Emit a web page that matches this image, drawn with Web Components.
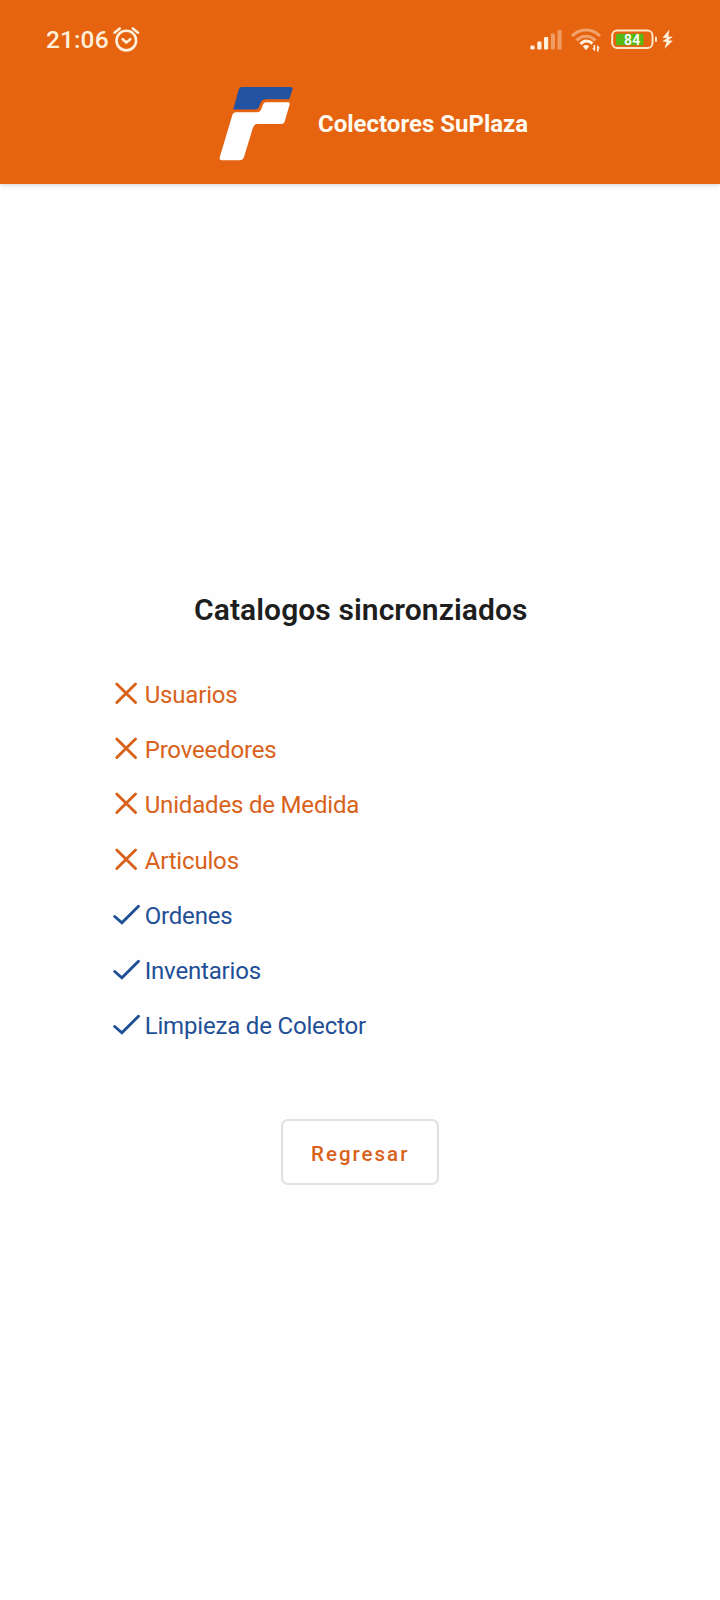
<!DOCTYPE html>
<html lang="es">
<head>
<meta charset="utf-8">
<title>Colectores SuPlaza</title>
<style>
html, body { margin: 0; background: #fefefe; }
body { font-family: Roboto, "Liberation Sans", sans-serif; }
</style>
</head>
<body>
<sync-screen></sync-screen>
<script>
function define(name, html) {
  const tpl = document.createElement('template');
  tpl.innerHTML = html;
  customElements.define(name, class extends HTMLElement {
    constructor() {
      super();
      this.attachShadow({ mode: 'open' }).appendChild(tpl.content.cloneNode(true));
    }
  });
}

define('status-bar', `
<style>
:host { display: flex; justify-content: space-between; height: 80px; box-sizing: border-box; padding: 0 44px 0 46px; color: #fff0dc; }
.time { display: flex; }
.clock { font-size: 24.5px; font-weight: 500; line-height: 30px; padding-top: 25px; width: 67px; white-space: nowrap; letter-spacing: .1px; }
svg { display: block; overflow: visible; }
.alarm { margin-top: 25.5px; }
.battery { display: grid; margin-top: 30px; }
.battery > * { grid-area: 1 / 1; }
.level { font-size: 14px; font-weight: 600; line-height: 20px; padding-left: 93px; color: #fff; letter-spacing: .2px; }
</style>
<div class="time"><span class="clock">21:06</span>
<svg class="alarm" width="27" height="28" viewBox="0 0 27 28" fill="none" stroke="currentColor" stroke-width="2.6" stroke-linecap="round" stroke-linejoin="round"><circle cx="13.3" cy="14.6" r="9.8"/><path d="M1.5 6.7 6.8 2.5M25 6.7 19.8 2.5M9.7 13.2l3.6 3.3 4-3.3"/></svg></div>
<div class="battery">
<svg width="145" height="22" viewBox="0 0 145 22">
<g fill="#fff0dc"><rect x="-.6" y="15.5" width="4.3" height="4" rx="1.3"/><rect x="6.3" y="11.5" width="4.2" height="8" rx="1"/><rect x="13" y="7" width="4.2" height="12.5" rx="1"/><g opacity=".4"><rect x="19.8" y="3.5" width="4.2" height="16" rx="1"/><rect x="26.5" y="0" width="4.2" height="19.5" rx="1"/></g></g>
<g fill="none" stroke="#fff0dc" stroke-width="3"><path opacity=".45" d="M41 6C49-2 61-2 69 6M45.500 10.500C51 4.800 59 4.800 64.500 10.500"/><path d="M49.500 14C53 10 57.500 10 61.500 13.500"/></g>
<path fill="#fff0dc" d="M51.700 16.300Q55 13.500 58.300 16.300L55 20.300ZM64.200 15v6.500l-3.200-3.300h1.500V15ZM66 21.500V15l3.200 3.200H67.700v3.300Z"/>
<rect x="81.2" y=".4" width="40.3" height="17.600" rx="5" fill="none" stroke="#ffe6c8" stroke-width="2"/>
<rect x="85" y="3.800" width="27.500" height="11.500" rx="1.500" fill="#58b814"/>
<rect x="124" y="6.500" width="2" height="5.500" rx="1" fill="#ffe6c8"/>
<path d="M138.500 -.5 131.500 7.800l4.700.5-4.900 2.900 4.300.8-2.200 6.700 8.400-8-4.600-.5 4.700-3.400-4.600-.4Z" fill="#fff0dc"/>
</svg><span class="level">84</span></div>`);

define('brand-logo', `
<style>:host { display: block; } svg { display: block; overflow: visible; }</style>
<svg width="75" height="75" viewBox="0 0 75 75">
<path fill="#2352a3" d="M21.800 0H70.200Q73.200 0 72.400 2.800L69.200 12.300H46Q42 12.300 40.800 15.500L38.700 20.500Q37.800 22.600 34.700 22.600H13.200L18.300 4Q19.300 0 21.800 0Z"/>
<path fill="#fff" d="M46 15.300H68Q70.300 15.300 69.500 18L64.500 35Q63.800 37 61 37H37.500Q34 37 33 40.500L24 70Q22.800 73.200 19.500 73.200H1.500Q-1 73.200-.2 70L12.500 27.500Q13.500 25.300 16 25.300H37Q40 25.300 41 22.500L43 17.500Q43.800 15.300 46 15.300Z"/>
</svg>`);

define('app-header', `
<style>
:host { display: block; height: 184px; background: #e66310; box-shadow: 0 1px 5px rgba(0,0,0,.18); }
.bar { display: flex; padding: 7px 0 0 219.5px; }
.name { margin-left: 23.5px; padding-top: 22px; font-size: 24px; font-weight: 700; line-height: 30px; color: #fffaf0; white-space: nowrap; }
</style>
<status-bar></status-bar>
<div class="bar"><brand-logo></brand-logo><span class="name"><slot></slot></span></div>`);

define('catalog-item', `
<style>
:host { display: flex; height: 55.3px; color: #d9621b; font-size: 24px; line-height: 28px; white-space: nowrap; letter-spacing: -.18px; }
:host([done]) { color: #1f4f96; }
svg { display: block; width: 33px; height: 32px; flex: none; fill: none; stroke: currentColor; stroke-width: 2.9; stroke-linecap: round; margin-top: -1px; }
span { padding: 1px 0 0 .7px; }
:host([done]) .cross, :host(:not([done])) .check { display: none; }
</style>
<svg class="cross" viewBox="0 0 33 32"><path d="M5.800 5 24.500 23.500M24.500 5 5.800 23.500"/></svg>
<svg class="check" viewBox="0 0 33 32" stroke-linejoin="miter"><path d="M3.700 16.500 10.900 22.800 27.500 6.300"/></svg>
<span><slot></slot></span>`);

define('outline-button', `
<style>
:host { display: block; box-sizing: border-box; width: 158px; height: 66px; border: 2px solid #e1e1e1; border-radius: 7px; background: #fff; color: #d9621b; font-size: 20.5px; font-weight: 500; line-height: 66px; padding-left: 28px; letter-spacing: 2px; }
</style><slot></slot>`);

define('sync-screen', `
<style>
:host { display: block; width: 720px; height: 1600px; background: #fefefe; overflow: hidden; }
h1 { margin: 407px 0 0; padding-left: 194px; font-size: 30px; line-height: 38px; font-weight: 600; color: #1e1e1e; white-space: nowrap; letter-spacing: .08px; }
.list { display: flex; flex-direction: column; padding: 50.7px 0 0 111px; height: 387.1px; }
outline-button { margin: 52.3px 0 0 281px; }
</style>
<app-header>Colectores SuPlaza</app-header>
<h1>Catalogos sincronziados</h1>
<div class="list">
<catalog-item>Usuarios</catalog-item>
<catalog-item>Proveedores</catalog-item>
<catalog-item>Unidades de Medida</catalog-item>
<catalog-item>Articulos</catalog-item>
<catalog-item done>Ordenes</catalog-item>
<catalog-item done>Inventarios</catalog-item>
<catalog-item done>Limpieza de Colector</catalog-item>
</div>
<outline-button>Regresar</outline-button>`);
</script>
</body>
</html>
